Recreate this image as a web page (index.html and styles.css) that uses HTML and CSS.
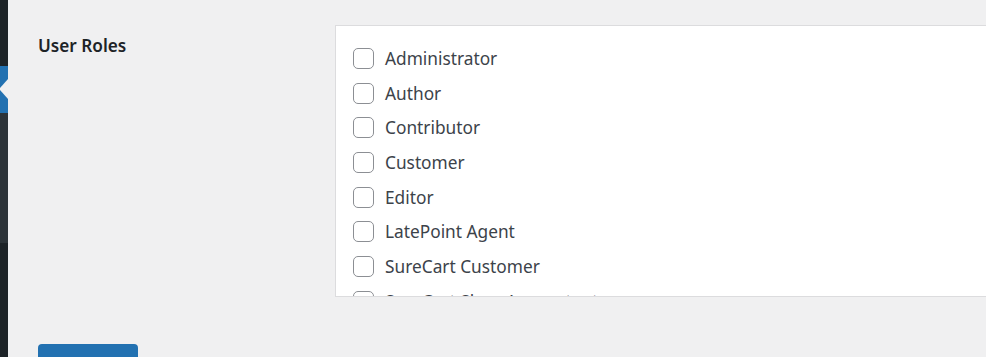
FILE: index.html
```html
<!DOCTYPE html>
<html>
	<head>
		<meta charset="UTF-8">
		<title>User Roles</title>
		<link rel="stylesheet" href="styles.css">
	</head>
	<body>
		<div class="page">
			<div class="adminmenu">
				<div class="menu-top"></div>
				<div class="menu-current"></div>
				<div class="submenu"></div>
				<div class="menu-rest"></div>
			</div>
			<div class="wrap">
				<div class="form-row">
					<div class="form-label">User Roles</div>
					<div class="role-box">
						<label class="role"><input type="checkbox"><span>Administrator</span></label>
						<label class="role"><input type="checkbox"><span>Author</span></label>
						<label class="role"><input type="checkbox"><span>Contributor</span></label>
						<label class="role"><input type="checkbox"><span>Customer</span></label>
						<label class="role"><input type="checkbox"><span>Editor</span></label>
						<label class="role"><input type="checkbox"><span>LatePoint Agent</span></label>
						<label class="role"><input type="checkbox"><span>SureCart Customer</span></label>
						<label class="role"><input type="checkbox"><span>SureCart Shop Accountant</span></label>
						<label class="role"><input type="checkbox"><span>SureCart Shop Manager</span></label>
						<label class="role"><input type="checkbox"><span>Subscriber</span></label>
					</div>
				</div>
				<button class="button-primary">Save Changes</button>
			</div>
		</div>
	</body>
</html>
```

FILE: styles.css
```css
body{
	margin: 0;
	background: #f0f0f1;
	font-family: "Noto Sans", "Open Sans", sans-serif;
	overflow: hidden;
}
.page{
	display: flex;
	height: 357px;
}
/* left admin menu, only its right edge shows */
.adminmenu{
	width: 8px;
	flex-shrink: 0;
	display: flex;
	flex-direction: column;
	background: #1d2327;
}
.menu-top{
	height: 66px;
}
.menu-current{
	height: 47px;
	background: #2271b1;
	position: relative;
}
.menu-current::after{
	content: "";
	position: absolute;
	right: 0;
	top: 13px;
	width: 9px;
	height: 20px;
	background: #f0f0f1;
	clip-path: polygon(100% 0, 0 50%, 100% 100%);
}
.submenu{
	height: 130px;
	background: #2c3338;
}
.menu-rest{
	flex: 1;
}
.wrap{
	flex: 1;
	padding: 25px 0 0 30px;
	min-width: 0;
}
.form-row{
	display: flex;
}
.form-label{
	width: 297px;
	flex-shrink: 0;
	padding-top: 9px;
	font-size: 17.2px;
	font-weight: 600;
	color: #1d2327;
}
.role-box{
	flex: 1;
	border: 1px solid #dcdcde;
	border-right: none;
	background: #fff;
	padding: 15px 0 0 17px;
	overflow: hidden;
	box-sizing: border-box;
	height: 272px;
}
.role{
	display: flex;
	align-items: center;
	height: 34.7px;
	font-size: 17.3px;
	color: #3c434a;
}
.role input{
	appearance: none;
	-webkit-appearance: none;
	width: 21px;
	height: 21px;
	margin: 0 11px 0 0;
	border: 1.25px solid #8c8f94;
	border-radius: 5px;
	background: #fff;
	box-sizing: border-box;
}
.button-primary{
	display: block;
	margin-top: 47px;
	width: 100px;
	height: 46px;
	padding-top: 12px;
	border: none;
	border-radius: 4px;
	background: #2271b1;
	color: #fff;
	font-family: inherit;
	font-size: 16px;
}
```
